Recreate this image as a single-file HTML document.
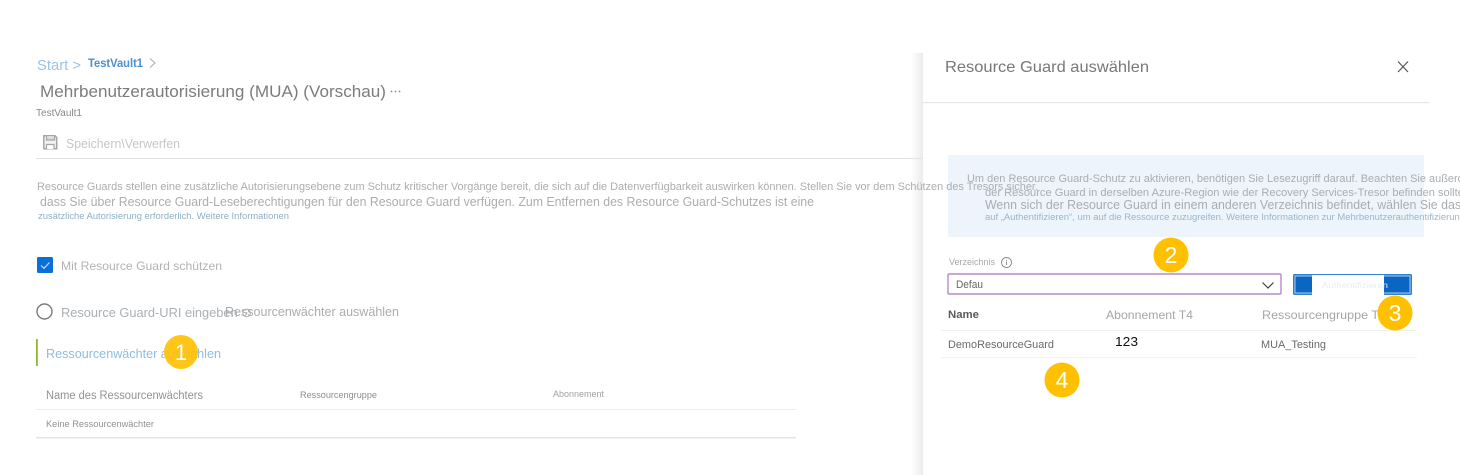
<!DOCTYPE html>
<html lang="de">
<head>
<meta charset="utf-8">
<title>Resource Guard auswählen</title>
<style>
html,body{margin:0;padding:0;background:#fff;width:1460px;height:475px;overflow:hidden}
svg{display:block;font-family:"Liberation Sans",sans-serif}
</style>
</head>
<body>
<svg width="1460" height="475" viewBox="0 0 1460 475" xmlns="http://www.w3.org/2000/svg">
<defs>
<linearGradient id="sh" x1="0" x2="1" y1="0" y2="0">
<stop offset="0" stop-color="#fff"/><stop offset="1" stop-color="#ebebeb"/>
</linearGradient>
</defs>
<rect width="1460" height="475" fill="#fff"/>

<!-- Panel shadow -->
<rect x="911" y="53" width="12" height="422" fill="url(#sh)"/>
<rect x="923" y="53" width="537" height="422" fill="#fff"/>

<!-- Info box -->
<rect x="948" y="155" width="476" height="82" fill="#eef4fc"/>

<!-- Left: header -->
<text x="37" y="70" font-size="15" fill="#9cc3e4" textLength="44" lengthAdjust="spacingAndGlyphs">Start &gt;</text>
<text x="88" y="67" font-size="12" font-weight="bold" fill="#4a90cc" textLength="55" lengthAdjust="spacingAndGlyphs">TestVault1</text>
<path d="M150 58.500l5 4.500-5 4.500" fill="none" stroke="#aaa" stroke-width="1"/>
<text x="40" y="97" font-size="17" fill="#7c7c7c" textLength="346" lengthAdjust="spacingAndGlyphs">Mehrbenutzerautorisierung  (MUA)  (Vorschau)</text>
<g fill="#888"><circle cx="391.500" cy="91.500" r=".9"/><circle cx="395.500" cy="91.500" r=".9"/><circle cx="399.500" cy="91.500" r=".9"/></g>
<text x="36" y="116" font-size="10" fill="#888" textLength="46" lengthAdjust="spacingAndGlyphs">TestVault1</text>

<!-- Toolbar -->
<path d="M43.800 135.800h11.200l1.700 1.700v11.200h-12.900z" fill="#f1f1f1" stroke="#a6a6a6" stroke-width="1.500"/>
<path d="M46.500 136v4h8v-4" fill="#ddd" stroke="#a6a6a6" stroke-width="1.200"/>
<path d="M46.500 149v-4.500h7.500v4.500" fill="#fff" stroke="#a6a6a6" stroke-width="1.200"/>
<text x="66" y="148" font-size="13" fill="#c6c6c6" textLength="114" lengthAdjust="spacingAndGlyphs">Speichern\Verwerfen</text>
<rect x="36" y="158" width="887" height="1" fill="#e3e3e3"/>

<!-- Description -->
<text x="37" y="190" font-size="11" fill="#adadad" textLength="1001" lengthAdjust="spacingAndGlyphs">Resource Guards stellen eine zusätzliche Autorisierungsebene zum Schutz kritischer Vorgänge bereit, die sich auf die Datenverfügbarkeit auswirken können. Stellen Sie vor dem Schützen des Tresors sicher.</text>
<text x="40" y="206" font-size="12.500" fill="#adadad" textLength="774" lengthAdjust="spacingAndGlyphs">dass Sie über Resource Guard-Leseberechtigungen für den Resource Guard verfügen. Zum Entfernen des Resource Guard-Schutzes ist eine</text>
<text x="38" y="219" font-size="9" fill="#8fafc2" textLength="251" lengthAdjust="spacingAndGlyphs">zusätzliche Autorisierung erforderlich. Weitere Informationen</text>

<!-- Checkbox -->
<rect x="37" y="257" width="16" height="16" rx="1.500" fill="#0a6fd6"/>
<path d="M41 265.500l3 2.800 5.500-5.800" fill="none" stroke="#cfe4f8" stroke-width="1.100"/>
<text x="61" y="270" font-size="12" fill="#b2b2b2" textLength="161" lengthAdjust="spacingAndGlyphs">Mit Resource Guard schützen</text>

<!-- Radio -->
<circle cx="44.500" cy="311.500" r="7.500" fill="#fff" stroke="#7a7a7a" stroke-width="1.400"/>
<text x="61" y="317" font-size="13" fill="#aab0b5" textLength="191" lengthAdjust="spacingAndGlyphs">Resource  Guard-URI eingeben ⊙</text>
<text x="225" y="316" font-size="12.500" fill="#acacac" textLength="174" lengthAdjust="spacingAndGlyphs">Ressourcenwächter auswählen</text>

<!-- Select link -->
<rect x="36" y="339" width="1.800" height="27" fill="#8fb92f"/>
<text x="46" y="358" font-size="12.500" fill="#8fbde0" textLength="175" lengthAdjust="spacingAndGlyphs">Ressourcenwächter auswählen</text>
<circle cx="181" cy="352" r="17" fill="#ffc000" fill-opacity=".9"/>
<text x="181" y="360" font-size="22" fill="#fff" text-anchor="middle">1</text>

<!-- Left table -->
<text x="46" y="399" font-size="11.500" fill="#929292" textLength="157" lengthAdjust="spacingAndGlyphs">Name des Ressourcenwächters</text>
<text x="300" y="398" font-size="9.500" fill="#8c8c8c" textLength="77" lengthAdjust="spacingAndGlyphs">Ressourcengruppe</text>
<text x="553" y="397" font-size="9" fill="#a0a0a0" textLength="51" lengthAdjust="spacingAndGlyphs">Abonnement</text>
<rect x="36" y="409" width="760" height="1" fill="#eeeeee"/>
<text x="46" y="427" font-size="9" fill="#919191" textLength="108" lengthAdjust="spacingAndGlyphs">Keine  Ressourcenwächter</text>
<rect x="36" y="437" width="760" height="1.500" fill="#e4e4e4"/>

<!-- Panel header -->
<text x="945" y="72" font-size="16" fill="#787878" textLength="204" lengthAdjust="spacingAndGlyphs">Resource  Guard auswählen</text>
<path d="M1398 61.500l10 10.500M1408 61.500l-10 10.500" fill="none" stroke="#555" stroke-width="1.200"/>
<rect x="923" y="102" width="506" height="1.200" fill="#e6e6e6"/>

<!-- Info text -->
<text x="967" y="182" font-size="11" fill="#a8adb2" textLength="512" lengthAdjust="spacingAndGlyphs">Um den Resource Guard-Schutz zu aktivieren, benötigen Sie Lesezugriff darauf. Beachten Sie außerdem</text>
<text x="985" y="196" font-size="11" fill="#a8adb2" textLength="482" lengthAdjust="spacingAndGlyphs">der Resource Guard in derselben Azure-Region wie der Recovery Services-Tresor befinden sollte.</text>
<text x="985" y="209" font-size="12.500" fill="#a8adb2" textLength="476" lengthAdjust="spacingAndGlyphs">Wenn sich der Resource Guard in einem anderen Verzeichnis befindet, wählen Sie das</text>
<text x="985" y="220" font-size="9" fill="#98b6cc" textLength="480" lengthAdjust="spacingAndGlyphs">auf „Authentifizieren“, um auf die Ressource zuzugreifen. Weitere Informationen zur Mehrbenutzerauthentifizierung</text>

<!-- Directory -->
<text x="949" y="265" font-size="9.500" fill="#a6a6a6" textLength="46" lengthAdjust="spacingAndGlyphs">Verzeichnis</text>
<circle cx="1006.500" cy="262.500" r="5" fill="none" stroke="#888" stroke-width=".9"/>
<path d="M1006.500 261.500v3.500M1006.500 259.700v1" stroke="#888" stroke-width=".9"/>
<rect x="948" y="274" width="333" height="20" rx="1" fill="#fff" stroke="#b48cc6" stroke-width="1.400"/>
<text x="956" y="288" font-size="11" fill="#666" textLength="27" lengthAdjust="spacingAndGlyphs">Defau</text>
<path d="M1262.500 282.500l5.500 5.500 5.500-5.500" fill="none" stroke="#444" stroke-width="1.200"/>

<!-- Button -->
<rect x="1293" y="274" width="119" height="21" rx="1.500" fill="#2f80cc"/>
<rect x="1295" y="276" width="115" height="17" fill="#0a66c2" stroke="#a8cbe8" stroke-width="1"/>
<rect x="1312" y="275" width="72" height="21" fill="#fff"/>
<text x="1322" y="288" font-size="8.500" fill="#e6edf3" textLength="66" lengthAdjust="spacingAndGlyphs">Authentifizieren</text>

<!-- Right table -->
<text x="948" y="318" font-size="11" font-weight="bold" fill="#5a5a5a" textLength="31" lengthAdjust="spacingAndGlyphs">Name</text>
<text x="1106" y="319" font-size="12" fill="#a6a6a6" textLength="87" lengthAdjust="spacingAndGlyphs">Abonnement T4</text>
<text x="1262" y="319" font-size="12" fill="#a6a6a6" textLength="124" lengthAdjust="spacingAndGlyphs">Ressourcengruppe T4</text>
<rect x="941" y="330" width="476" height="1" fill="#f0f0f0"/>
<text x="948" y="348" font-size="11" fill="#6a6a6a" textLength="106" lengthAdjust="spacingAndGlyphs">DemoResourceGuard</text>
<text x="1115" y="346" font-size="13" fill="#111" textLength="23" lengthAdjust="spacingAndGlyphs">123</text>
<text x="1261" y="348" font-size="11" fill="#6a6a6a" textLength="65" lengthAdjust="spacingAndGlyphs">MUA_Testing</text>
<rect x="941" y="357" width="476" height="1" fill="#f3f3f3"/>

<!-- Callouts -->
<circle cx="1171" cy="255" r="17.500" fill="#ffc000"/>
<text x="1171" y="263" font-size="23" fill="#fff" text-anchor="middle">2</text>
<circle cx="1395" cy="313" r="17.500" fill="#ffc000"/>
<text x="1395" y="321" font-size="23" fill="#fff" text-anchor="middle">3</text>
<circle cx="1062" cy="380" r="17.500" fill="#ffc000"/>
<text x="1062" y="388" font-size="23" fill="#fff" text-anchor="middle">4</text>
</svg>
</body>
</html>
